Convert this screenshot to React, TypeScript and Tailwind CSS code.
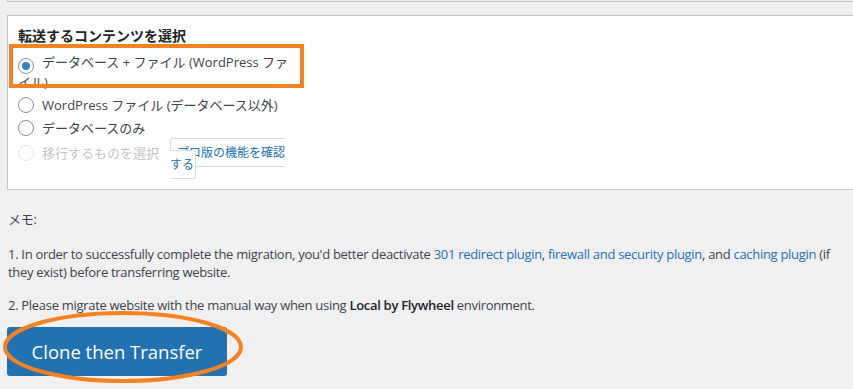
const font = {
  fontFamily: '"Open Sans", "Noto Sans CJK JP", sans-serif',
};

const Radio = ({ checked, disabled }: { checked?: boolean; disabled?: boolean }) => (
  <span
    className={`inline-flex items-center justify-center w-4 h-4 rounded-full border align-[-3px] mr-2 bg-white ${
      disabled ? "border-[#e3e3e5]" : "border-[#8c8f94]"
    }`}
  >
    {checked && <span className="w-2 h-2 rounded-full bg-[#3582c4]" />}
  </span>
);

const App = () => {
  return (
    <div
      className="w-[853px] h-[389px] overflow-hidden bg-[#f0f0f1] text-[#3c434a] text-[13px]"
      style={font}
    >
      {/* 上のボックスの下端 */}
      <div className="ml-[7px] h-[2px] border-l border-b border-[#c3c4c7] bg-[#f0f0f1]" />

      {/* 転送パネル */}
      <div className="ml-[7px] mt-[13px] h-[175px] bg-white border-l border-y border-[#c3c4c7] pl-[10px] pt-[10px]">
        <h3 className="text-[14px] font-bold leading-[20px] text-[#1d2327] mb-[8px]">
          転送するコンテンツを選択
        </h3>
        <div className="w-[274px]">
          <div className="relative leading-[16px] mb-[7px]">
            <Radio checked />
            データベース + ファイル (WordPress ファイル)
            {/* 注釈の枠 */}
            <div className="absolute left-[-9px] top-[-10px] w-[295px] h-[44px] border-4 border-[#f58220] pointer-events-none" />
          </div>
          <div className="leading-[16px] mb-[7px]">
            <Radio />
            WordPress ファイル (データベース以外)
          </div>
          <div className="leading-[16px] mb-[9px]">
            <Radio />
            データベースのみ
          </div>
          <div className="leading-[16px]">
            <Radio disabled />
            <span className="text-[#c3c4c7] align-top">移行するものを選択</span>
            <span className="inline-block align-top w-[116px] ml-[11px] text-[12px] leading-[12px] mt-[2px]">
              <a className="pl-[6px] pr-[1px] py-[5px] border border-[#dcdcde] rounded-[3px] bg-white text-[#2271b1]">
                プロ版の機能を確認する
              </a>
            </span>
          </div>
        </div>
      </div>

      {/* メモ */}
      <div className="pl-[8px] leading-[18px] tracking-[-0.3px]">
        <p className="mt-[20px]">メモ:</p>
        <p className="mt-[17px] w-[845px]">
          1. In order to successfully complete the migration, you'd better deactivate{" "}
          <a className="text-[#2271b1]">301 redirect plugin</a>,{" "}
          <a className="text-[#2271b1]">firewall and security plugin</a>, and{" "}
          <a className="text-[#2271b1]">caching plugin</a> (if they exist) before
          transferring website.
        </p>
        <p className="mt-[15px]">
          2. Please migrate website with the manual way when using{" "}
          <b className="font-semibold text-[#1d2327]">Local by Flywheel</b> environment.
        </p>
        <div className="relative mt-[13px] w-fit tracking-normal">
          <button className="w-[220px] h-[49px] ml-[-1px] rounded-[3px] bg-[#2271b1] text-white text-[18.5px]">
            Clone then Transfer
          </button>
          {/* 注釈の楕円 */}
          <svg
            className="absolute left-[-8px] top-[-17px] pointer-events-none"
            width="246"
            height="76"
            viewBox="0 0 246 76"
          >
            <ellipse cx="123" cy="37" rx="118" ry="34" fill="none" stroke="#f58220" strokeWidth="4" />
          </svg>
        </div>
      </div>
    </div>
  );
};

export default App;
